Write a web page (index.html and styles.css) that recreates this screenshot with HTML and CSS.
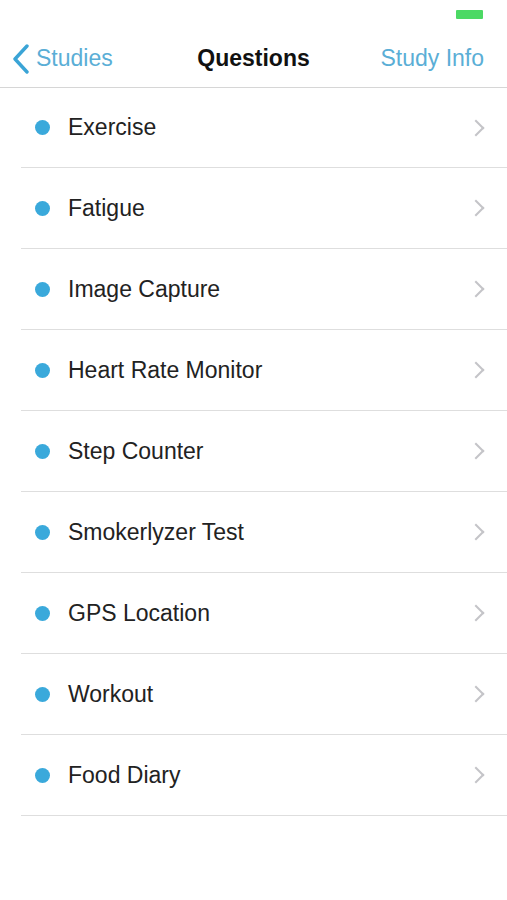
FILE: index.html
```html
<!DOCTYPE html>
<html lang="en">

<head>
    <meta charset="UTF-8">
    <meta name="viewport" content="width=device-width, initial-scale=1.0">
    <title>Questions</title>
    <link rel="stylesheet" href="styles.css">
</head>

<body>
    <!-- status bar -->
    <div class="status-bar">
        <div class="battery"></div>
    </div>

    <!-- navigation -->
    <div class="nav-bar">
        <a class="nav-back" href="#">
            <svg class="back-icon" width="18" height="30" viewBox="0 0 18 30">
                <path d="M15 2 L3 15 L15 28" fill="none" stroke="#3aa4d6" stroke-width="3.4" stroke-linecap="round" stroke-linejoin="round" />
            </svg>
            <span>Studies</span>
        </a>
        <div class="nav-title">Questions</div>
        <a class="nav-right" href="#">Study Info</a>
    </div>

    <ul class="question-list">
        <li class="question"><span class="dot"></span><span class="label">Exercise</span><span class="chevron"></span></li>
        <li class="question"><span class="dot"></span><span class="label">Fatigue</span><span class="chevron"></span></li>
        <li class="question"><span class="dot"></span><span class="label">Image Capture</span><span class="chevron"></span></li>
        <li class="question"><span class="dot"></span><span class="label">Heart Rate Monitor</span><span class="chevron"></span></li>
        <li class="question"><span class="dot"></span><span class="label">Step Counter</span><span class="chevron"></span></li>
        <li class="question"><span class="dot"></span><span class="label">Smokerlyzer Test</span><span class="chevron"></span></li>
        <li class="question"><span class="dot"></span><span class="label">GPS Location</span><span class="chevron"></span></li>
        <li class="question"><span class="dot"></span><span class="label">Workout</span><span class="chevron"></span></li>
        <li class="question"><span class="dot"></span><span class="label">Food Diary</span><span class="chevron"></span></li>
    </ul>
</body>

</html>
```

FILE: styles.css
```css
body {
    font-family: 'Liberation Sans', Arial, sans-serif;
    background-color: #fff;
    margin: 0;
    padding: 0;
    color: #222;
}

/* Status bar */
.status-bar {
    height: 30px;
    display: flex;
    justify-content: flex-end;
    align-items: flex-start;
    padding: 10px 24px 0 0;
    box-sizing: border-box;
}

.battery {
    width: 27px;
    height: 9px;
    background-color: #4cd964;
    border-radius: 1px;
}

/* Nav bar */
.nav-bar {
    height: 57px;
    display: flex;
    align-items: center;
    justify-content: space-between;
    padding: 0 23px 0 12px;
    border-bottom: 1px solid #d6d6d6;
    position: relative;
    font-size: 23px;
}

.nav-back,
.nav-right {
    color: #5aaed6;
    text-decoration: none;
}

.nav-back {
    display: flex;
    align-items: center;
    gap: 6px;
}

.back-icon {
    display: block;
}

.nav-title {
    position: absolute;
    left: 0;
    right: 0;
    text-align: center;
    font-weight: bold;
    color: #111;
    pointer-events: none;
}

/* Question list */
.question-list {
    list-style: none;
    margin: 0;
    padding: 0 0 0 21px;
}

.question {
    height: 80px;
    display: flex;
    align-items: center;
    border-bottom: 1px solid #dedede;
    font-size: 23px;
}

.question:first-child {
    height: 79px;
}

.dot {
    width: 15px;
    height: 15px;
    border-radius: 50%;
    background-color: #3aa9db;
    margin-left: 14px;
    margin-right: 18px;
}

.label {
    flex: 1;
    color: #222;
}

.chevron {
    width: 10px;
    height: 10px;
    border-top: 2px solid #c4c4c8;
    border-right: 2px solid #c4c4c8;
    transform: rotate(45deg);
    margin-right: 25px;
}
```
